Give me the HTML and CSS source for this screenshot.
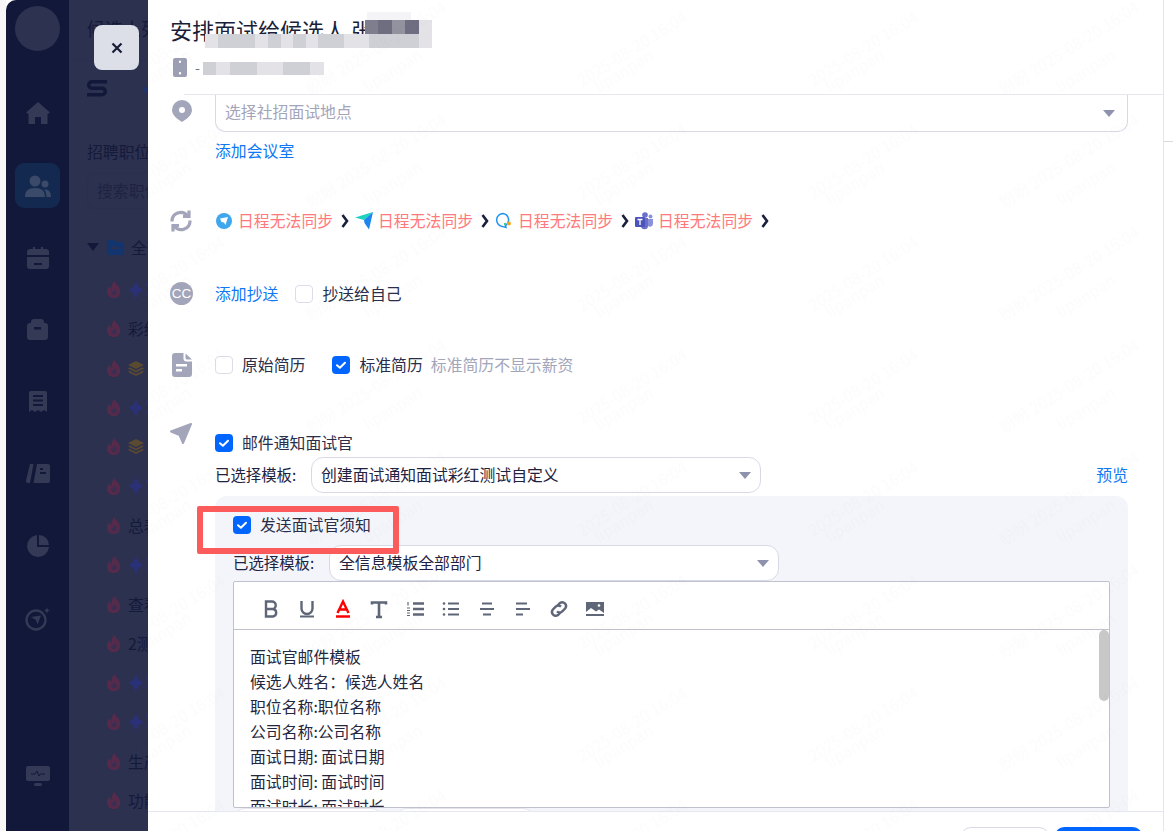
FILE: index.html
```html
<!DOCTYPE html>
<html lang="zh">
<head>
  <meta charset="utf-8">
  <title>安排面试</title>
  <link rel="stylesheet" href="styles.css">
</head>
<body>
<svg class="defs" width="0" height="0">
  <symbol id="flame" viewBox="0 0 14 17"><path d="M7.500 0c.6 2.600 3 3.600 4.600 6.300 2.300 3.900 1 10.700-5.100 10.700C2.600 17 0 14 0 10.700 0 8 1.300 6.300 2.800 5c0 1.600.5 2.500 1.500 3C4.300 5 5.500 2.300 7.500 0z"/><path class="flame-hole" d="M7.500 8c.3 1.200 2.300 2 2.300 3.800A2.800 2.800 0 014.300 12c0-.8.3-1.400.8-1.800.2.600.5.900 1 1 0-1.200.5-2.200 1.400-3.200z"/></symbol>
  <symbol id="spark" viewBox="0 0 26 20"><path d="M8 0c1 5.500 2.800 7.800 8 10-5.200 2.200-7 4.500-8 10-1-5.500-2.800-7.800-8-10 5.200-2.200 7-4.500 8-10z"/><path d="M20 1c.4 2.200 1.100 3.100 3.400 3.800-2.300.7-3 1.600-3.400 3.800-.4-2.200-1.100-3.100-3.400-3.800 2.300-.7 3-1.600 3.400-3.800zM20 11.500c.3 1.800.9 2.500 2.800 3-1.900.5-2.500 1.200-2.800 3-.3-1.800-.9-2.500-2.800-3 1.900-.5 2.500-1.200 2.800-3z"/></symbol>
  <symbol id="layers" viewBox="0 0 16 15"><path d="M8 0l8 4-8 4-8-4zM1.500 6.300L8 9.600l6.500-3.300L16 7.500l-8 4-8-4zM1.500 9.800L8 13l6.500-3.200L16 11l-8 4-8-4z"/></symbol>
  <symbol id="chev" viewBox="0 0 8 14"><path d="M1.500 1l4.500 6-4.500 6" fill="none" stroke="currentColor" stroke-width="2.600" stroke-linejoin="miter"/></symbol>
  <symbol id="tick" viewBox="0 0 18 18"><rect width="18" height="18" rx="4" fill="#0066ff"/><path d="M5 9.200l2.900 2.500L13 6.700" fill="none" stroke="#fff" stroke-width="2" stroke-linecap="round" stroke-linejoin="round"/></symbol>
</svg>

<div class="app">
  <div class="gutter"></div>

  <nav class="sidebar">
    <div class="avatar"></div>
    <a class="nav-item nav-home"><svg width="24" height="22" viewBox="0 0 24 22"><path d="M12 0L24 10.500 21.500 12V22H15v-7H9v7H2.500V12L0 10.500z"/></svg></a>
    <a class="nav-item nav-active"><svg width="26" height="22" viewBox="0 0 26 22"><circle cx="10" cy="6" r="5.500"/><circle cx="20" cy="9" r="3.500"/><path d="M0 22c0-6 3-9 10-9s10 3 10 9zM21.500 22c0-3.500-.8-6-2.500-7.500 4.500-.5 7 2 7 7.500z"/></svg></a>
    <a class="nav-item nav-cal"><svg width="22" height="22" viewBox="0 0 22 22"><path d="M3 2h3V0h2v2h6V0h2v2h3a3 3 0 013 3v3H0V5a3 3 0 013-3zM0 10h22v9a3 3 0 01-3 3H3a3 3 0 01-3-3zm7 6v2h8v-2z" fill-rule="evenodd"/></svg></a>
    <a class="nav-item nav-bag"><svg width="21" height="21" viewBox="0 0 21 21"><path d="M7 0h7a3 3 0 013 3v1h1a3 3 0 013 3v11a3 3 0 01-3 3H3a3 3 0 01-3-3V7a3 3 0 013-3h1V3a3 3 0 013-3zM7 8v2.500h7V8z" fill-rule="evenodd"/></svg></a>
    <a class="nav-item nav-bill"><svg width="18" height="21" viewBox="0 0 18 21"><path d="M2 0h14a2 2 0 012 2v19l-3-2-3 2-3-2-3 2-3-2-3 2V2a2 2 0 012-2zm2 4v2h10V4zm0 4.500v2h10v-2zM4 13v2h10v-2z" fill-rule="evenodd"/></svg></a>
    <a class="nav-item nav-book"><svg width="24" height="19" viewBox="0 0 24 19"><path d="M4 0h3.500L4 19H2a2 2 0 01-2-2.500zM11 0h11a2 2 0 012 2v15a2 2 0 01-2 2H7.500zm3 4v2h3V4zm0 4v2h6V8z" fill-rule="evenodd"/></svg></a>
    <a class="nav-item nav-pie"><svg width="22" height="22" viewBox="0 0 22 22"><path d="M10 0v12h12A11 11 0 1110 0z"/><path d="M12 0a10 10 0 0110 10H12z"/></svg></a>
    <a class="nav-item nav-target"><svg width="26" height="24" viewBox="0 0 26 24" fill="none"><circle cx="11" cy="13" r="9.500" stroke="currentColor" stroke-width="2.400"/><path d="M6 10l10-1.500-3.500 9L11 13z" fill="currentColor"/><path d="M22 0c.3 2.200 1.300 3.200 3.500 3.500-2.200.3-3.200 1.300-3.500 3.500-.3-2.200-1.300-3.200-3.500-3.500 2.200-.3 3.200-1.300 3.500-3.500z" fill="currentColor"/></svg></a>
    <a class="nav-item nav-monitor"><svg width="24" height="20" viewBox="0 0 24 20"><rect width="24" height="15" rx="2"/><rect x="8" y="17" width="8" height="3" rx="1.500"/><path class="pulse" d="M5 8h4l2-3 2 5 1.500-2H19" fill="none" stroke-width="1"/></svg></a>
  </nav>

  <aside class="list-col">
    <div class="list-title">候选人列表</div>
    <div class="list-tools">
      <svg width="20" height="18" viewBox="0 0 20 18"><path d="M5 0h15v3.500H5a1.500 1.500 0 000 3h10a5 5 0 010 10H0V13h15a1.500 1.500 0 000-3H5A5 5 0 015 0z"/></svg>
      <span class="tool-dot"></span>
    </div>
    <div class="list-label">招聘职位名称</div>
    <div class="list-search">搜索职位名称</div>
    <div class="tree-root">
      <span class="caret"></span>
      <svg width="17" height="15" viewBox="0 0 17 15"><path d="M2 0h5l2 2h6a2 2 0 012 2v9a2 2 0 01-2 2H2a2 2 0 01-2-2V2a2 2 0 012-2zm3 7v2h7V7z" fill-rule="evenodd"/></svg>
      <span>全部职位</span>
    </div>
    <ul class="tree">
      <li><svg class="flame"><use href="#flame"/></svg><svg class="spark"><use href="#spark"/></svg></li>
      <li><svg class="flame"><use href="#flame"/></svg><span>彩红测试</span></li>
      <li><svg class="flame"><use href="#flame"/></svg><svg class="layers"><use href="#layers"/></svg></li>
      <li><svg class="flame"><use href="#flame"/></svg><svg class="spark"><use href="#spark"/></svg></li>
      <li><svg class="flame"><use href="#flame"/></svg><svg class="layers"><use href="#layers"/></svg></li>
      <li><svg class="flame"><use href="#flame"/></svg><svg class="spark"><use href="#spark"/></svg></li>
      <li><svg class="flame"><use href="#flame"/></svg><span>总表测试</span></li>
      <li><svg class="flame"><use href="#flame"/></svg><svg class="spark"><use href="#spark"/></svg></li>
      <li><svg class="flame"><use href="#flame"/></svg><span>查看职位</span></li>
      <li><svg class="flame"><use href="#flame"/></svg><span>2测试</span></li>
      <li><svg class="flame"><use href="#flame"/></svg><svg class="spark"><use href="#spark"/></svg></li>
      <li><svg class="flame"><use href="#flame"/></svg><svg class="spark"><use href="#spark"/></svg></li>
      <li><svg class="flame"><use href="#flame"/></svg><span>生产环境</span></li>
      <li><svg class="flame"><use href="#flame"/></svg><span>功能测试</span></li>
    </ul>
  </aside>

  <main class="drawer">
    <header class="drawer-head">
      <h1 class="drawer-title">安排面试给候选人 张</h1>
      <div class="phone-line">
        <svg width="14" height="19" viewBox="0 0 14 19"><path d="M2 0h10a2 2 0 012 2v15a2 2 0 01-2 2H2a2 2 0 01-2-2V2a2 2 0 012-2zm5 2.500a1.200 1.200 0 100 2.400 1.200 1.200 0 000-2.400zm0 11.600a1.200 1.200 0 100 2.400 1.200 1.200 0 000-2.400z" fill-rule="evenodd"/></svg>
        <span>-</span>
      </div>
      <div class="mosaic mosaic-a"><i class="m0"></i><i class="m0"></i><i class="m0"></i></div>
      <div class="mosaic mosaic-b"><i class="m4"></i><i class="m5"></i><i class="m3"></i><i class="m5"></i><i class="m1"></i></div>
      <div class="mosaic mosaic-c"><i class="m1"></i><i class="m2"></i><i class="m2"></i><i class="m2"></i><i class="m1"></i><i class="m2"></i><i class="m1"></i><i class="m2"></i><i class="m1"></i><i class="m2"></i><i class="m2"></i><i class="m1"></i><i class="m1"></i><i class="m2"></i><i class="m2"></i><i class="m2"></i><i class="m2"></i><i class="m1"></i></div>
      <div class="mosaic mosaic-d"><i class="m2"></i><i class="m1"></i><i class="m2"></i><i class="m2"></i><i class="m1"></i><i class="m1"></i><i class="m2"></i><i class="m2"></i><i class="m1"></i></div>
    </header>

    <div class="drawer-body">
      <section class="row">
        <svg class="row-icon icon-pin" width="20" height="22" viewBox="0 0 20 22"><path d="M10 0a10 10 0 0110 10c0 5-5 9-10 12C5 19 0 15 0 10A10 10 0 0110 0zm0 7a3 3 0 100 6 3 3 0 000-6z" fill-rule="evenodd"/></svg>
        <div>
          <div class="select select-place"><span class="tx placeholder">选择社招面试地点</span><span class="tri"></span></div>
          <a class="link add-room">添加会议室</a>
        </div>
      </section>

      <section class="row row-sync">
        <svg class="row-icon icon-sync" width="24" height="24" viewBox="0 0 24 24"><path d="M3 12.500A8.800 8.800 0 0118.500 6.500M21 11.500A8.800 8.800 0 015.500 17.500"/><path d="M20 1.500v6h-6M4 22.500v-6h6"/></svg>
        <div class="sync-list">
          <svg class="sync-icon" width="16" height="16" viewBox="0 0 16 16"><circle cx="8" cy="8" r="8" fill="#3fa7ee"/><path d="M4 5.500l8-1.500-2.500 8-1.500-2.500L5.500 9z" fill="#fff"/></svg>
          <span class="sync-err">日程无法同步</span>
          <svg class="chev"><use href="#chev"/></svg>
          <svg class="sync-icon" width="18" height="18" viewBox="0 0 18 18"><path d="M0 5.500L18 0 9 8z" fill="#1fd2c0"/><path d="M18 0l-4 17.500L9.500 11 9 8z" fill="#1a86ee"/></svg>
          <span class="sync-err">日程无法同步</span>
          <svg class="chev"><use href="#chev"/></svg>
          <svg class="sync-icon" width="18" height="18" viewBox="0 0 18 18" fill="none"><path d="M8 1.500a6.500 6.500 0 00-1 12.900l4 1.100-.6-2A6.500 6.500 0 008 1.500z" stroke="#1f93ee" stroke-width="1.500"/><circle cx="14" cy="11.500" r="2" fill="#f5a623"/><circle cx="10" cy="12" r="1.200" fill="#3ecf8e"/></svg>
          <span class="sync-err">日程无法同步</span>
          <svg class="chev"><use href="#chev"/></svg>
          <svg class="sync-icon" width="18" height="18" viewBox="0 0 18 18"><circle cx="10" cy="3" r="2.800" fill="#6a70c9"/><circle cx="15.500" cy="4.500" r="2" fill="#8a90dc"/><path d="M12 7h6v5a3 3 0 01-5 2z" fill="#8a90dc"/><path d="M6 6h7v7.500A3.500 3.500 0 016 14z" fill="#6a70c9"/><rect y="5" width="10" height="10" rx="1" fill="#4b53bc"/><path d="M2.500 7.500h5M5 7.500v5.500" stroke="#fff" stroke-width="1.300"/></svg>
          <span class="sync-err">日程无法同步</span>
          <svg class="chev"><use href="#chev"/></svg>
        </div>
      </section>

      <section class="row row-cc">
        <div class="cc-badge">CC</div>
        <div class="inline-set">
          <a class="link">添加抄送</a>
          <label class="check"><span class="box"></span><span class="tx">抄送给自己</span></label>
        </div>
      </section>

      <section class="row row-resume">
        <svg class="row-icon icon-file" width="20" height="24" viewBox="0 0 20 24"><path d="M3 0h8.500v5.500a3 3 0 003 3H20V21a3 3 0 01-3 3H3a3 3 0 01-3-3V3a3 3 0 013-3zm1 11v2.500h11V11zm0 5v2.500h6V16z" fill-rule="evenodd"/><path d="M13.500 .5L20 6.500h-5a1.500 1.500 0 01-1.500-1.500z"/></svg>
        <div class="inline-set inline-resume">
          <label class="check"><span class="box"></span><span class="tx">原始简历</span></label>
          <label class="check"><svg class="box-on"><use href="#tick"/></svg><span class="tx">标准简历</span></label>
          <span class="tx hint">标准简历不显示薪资</span>
        </div>
      </section>

      <section class="row row-mail">
        <svg class="row-icon icon-send" width="22" height="21" viewBox="0 0 22 21"><path d="M21 1L1 8.500 9.500 12 13 20z"/></svg>
        <div class="mail-col">
          <label class="check"><svg class="box-on"><use href="#tick"/></svg><span class="tx">邮件通知面试官</span></label>
          <div class="tpl-line">
            <span class="tx tpl-label">已选择模板:</span>
            <div class="select select-tpl"><span class="tx">创建面试通知面试彩红测试自定义</span><span class="tri"></span></div>
            <a class="link preview">预览</a>
          </div>
          <div class="panel">
            <label class="check"><svg class="box-on"><use href="#tick"/></svg><span class="tx">发送面试官须知</span></label>
            <div class="tpl-line tpl-line-inner">
              <span class="tx tpl-label">已选择模板:</span>
              <div class="select select-tpl"><span class="tx">全信息模板全部部门</span><span class="tri"></span></div>
            </div>
            <div class="editor">
              <div class="toolbar">
                <svg viewBox="0 0 20 20"><path d="M5 2.500h6a3.700 3.700 0 010 7.500H5zM5 10h7a3.800 3.800 0 010 7.500H5z" fill="none" stroke="currentColor" stroke-width="2.400"/></svg>
                <svg viewBox="0 0 20 20"><path d="M4.500 2v7.500a5.500 5.500 0 0011 0V2" fill="none" stroke="currentColor" stroke-width="2.400"/><path d="M3 17.500h14" stroke="currentColor" stroke-width="2.200"/></svg>
                <svg viewBox="0 0 20 20"><path d="M4.500 14L10 2.500 15.500 14M6.500 10.500h7" fill="none" stroke="#f00" stroke-width="2.400"/><path d="M3 17.500h14" stroke="#f00" stroke-width="2.400"/></svg>
                <svg viewBox="0 0 20 20"><path d="M3 5.500V3.500h14v2M10 3.500V18M7 18h6" fill="none" stroke="currentColor" stroke-width="2.600"/></svg>
                <svg viewBox="0 0 20 20"><path d="M8 4.500h11M8 10h11M8 15.500h11" stroke="currentColor" stroke-width="2.600"/><path d="M3 3v3.500M2 9h3M2 11.500h3M2 14h3M2 16.500h3" stroke="currentColor" stroke-width="1.200"/></svg>
                <svg viewBox="0 0 20 20"><path d="M7 4.500h11M7 10h11M7 15.500h11" stroke="currentColor" stroke-width="2.200"/><circle cx="3" cy="4.500" r="1.300" fill="currentColor"/><circle cx="3" cy="10" r="1.300" fill="currentColor"/><circle cx="3" cy="15.500" r="1.300" fill="currentColor"/></svg>
                <svg viewBox="0 0 20 20"><path d="M5 4.500h10M3 10h14M6 15.500h8" stroke="currentColor" stroke-width="2.200"/></svg>
                <svg viewBox="0 0 20 20"><path d="M3 4.500h11M3 10h14M3 15.500h7" stroke="currentColor" stroke-width="2.200"/></svg>
                <svg viewBox="0 0 20 20" fill="none" stroke="currentColor" stroke-width="2.400"><path d="M8.500 6.500l2.500-2.500a3.800 3.800 0 015.300 5.300l-3 3a3.800 3.800 0 01-5.300 0"/><path d="M11.500 13.500L9 16a3.800 3.800 0 01-5.300-5.300l3-3a3.800 3.800 0 015.300 0"/></svg>
                <svg viewBox="0 0 20 20"><path d="M1 3h18v14H1zM1 13l5-4 5 3.500 3-2 5 3.500V15H1z" fill="currentColor" fill-rule="evenodd"/><circle cx="14" cy="6.500" r="1.300" fill="#fff"/></svg>
              </div>
              <div class="editor-text">
                <p>面试官邮件模板</p>
                <p>候选人姓名：候选人姓名</p>
                <p>职位名称:职位名称</p>
                <p>公司名称:公司名称</p>
                <p>面试日期: 面试日期</p>
                <p>面试时间: 面试时间</p>
                <p>面试时长: 面试时长</p>
                <div class="scroll-thumb"></div>
              </div>
            </div>
            <div class="below-editor"><span class="stub stub-a"></span><span class="stub stub-b"></span></div>
          </div>
        </div>
      </section>
    </div>

    <footer class="drawer-foot">
      <button class="btn btn-plain">取消</button>
      <button class="btn btn-main">确定</button>
    </footer>
  </main>

  <div class="edge"><span class="edge-tick"></span></div>
</div>

<button class="close-btn"><svg width="12" height="12" viewBox="0 0 12 12"><path d="M1.500 1.500l9 9M10.500 1.500l-9 9" stroke="#161b38" stroke-width="2.200"/></svg></button>
<div class="red-box"></div>

<svg class="watermark" width="1173" height="831">
  <defs>
    <pattern id="wm" width="693" height="112.600" patternUnits="userSpaceOnUse">
      <g>
        <text transform="translate(120 87) rotate(-32)">2025-08-20 16:04</text>
        <text transform="translate(137 93) rotate(-32)">lipanpan</text>
      </g>
      <g>
        <text transform="translate(311 96) rotate(-32)">盼盼 2025-08-20 16:04</text>
        <text transform="translate(368 93) rotate(-32)">lipanpan</text>
      </g>
      <g>
        <text transform="translate(582 87) rotate(-32)">2025-08-20 16:04</text>
        <text transform="translate(599 93) rotate(-32)">lipanpan</text>
      </g>
    </pattern>
  </defs>
  <rect width="1173" height="831" fill="url(#wm)"/>
</svg>
</body>
</html>
```

FILE: styles.css
```css
* { box-sizing: border-box; }

html, body {
  margin: 0;
  padding: 0;
  background: #fff;
  font-family: "Noto Sans CJK SC", "Noto Sans", sans-serif;
  color: #1f2340;
}

.defs { position: absolute; }

.app {
  display: flex;
  width: 1173px;
  height: 831px;
  overflow: hidden;
}

.gutter { width: 6px; background: #f7f7f8; }

/* left nav, dimmed by the drawer mask */
.sidebar {
  width: 63px;
  display: flex;
  flex-direction: column;
  align-items: center;
  padding-top: 6px;
  background: #12183a;
  border-radius: 10px 0 0 0;
  color: #343955;
}
.sidebar svg { fill: #343955; display: block; }
.avatar { width: 45px; height: 45px; border-radius: 50%; background: #2d3250; }
.nav-item { display: flex; justify-content: center; align-items: center; width: 45px; height: 45px; }
.nav-home { margin-top: 39px; }
.nav-active { margin-top: 28px; background: #13294f; border-radius: 9px; }
.nav-active svg { fill: #3a4a68; }
.nav-cal { margin-top: 27px; }
.nav-bag { margin-top: 27px; }
.nav-bill { margin-top: 27px; }
.nav-book { margin-top: 27px; }
.nav-pie { margin-top: 27px; }
.nav-target { margin-top: 28px; }
.nav-target svg { fill: none; }
.nav-monitor { margin-top: 112px; }
.nav-monitor .pulse { stroke: #12183a; }

.list-col {
  width: 79px;
  background: #2c3150;
  padding-left: 18px;
  color: #141a3a;
  overflow: hidden;
  white-space: nowrap;
  font-size: 15.850px;
}
.list-title {
  margin-left: -18px;
  padding: 15px 0 0 18px;
  height: 61px;
  font-size: 18px;
  line-height: 26px;
  border-bottom: 1px solid #2a2f4e;
}
.list-tools { display: flex; align-items: center; gap: 36px; height: 22px; margin-top: 17px; }
.list-tools svg { fill: #12183a; flex: none; }
.tool-dot { width: 5px; height: 5px; border-radius: 50%; background: #1d3470; flex: none; }
.list-label { margin-top: 40px; line-height: 24px; }
.list-search {
  width: 90px;
  height: 36px;
  margin-top: 9px;
  padding-left: 9px;
  line-height: 34px;
  border: 1px solid #2a2f4e;
  border-radius: 8px;
  color: #1e2342;
}
.tree-root { display: flex; align-items: center; gap: 7px; height: 24px; margin-top: 26px; }
.tree-root svg { fill: #13356f; flex: none; margin-left: -1px; }
.caret { width: 0; height: 0; border: 6.500px solid transparent; border-top: 8px solid #12183a; border-bottom: 0; flex: none; margin-right: 2px; }
.tree { list-style: none; margin: 11px 0 0 20px; padding: 0; }
.tree li { display: flex; align-items: center; gap: 7px; height: 39.300px; }
.tree .flame { width: 14px; height: 17px; fill: #562a4a; flex: none; }
.flame-hole { fill: #3a2f52; }
.tree .spark { width: 26px; height: 20px; fill: #2b3176; flex: none; }
.tree .layers { width: 16px; height: 15px; fill: #5a4a30; flex: none; }

/* drawer */
.drawer {
  width: 1015px;
  display: flex;
  flex-direction: column;
  background: #fff;
}
.drawer-head {
  position: relative;
  flex: none;
  height: 95px;
  padding: 14px 0 0 22px;
}
.drawer-head::after {
  content: "";
  position: absolute;
  left: 36px;
  right: 0;
  bottom: 0;
  height: 1px;
  background: #e6e7f0;
}
.drawer-title { margin: 0; font-size: 22px; font-weight: 400; line-height: 30px; color: #1a1e38; white-space: nowrap; }
.phone-line { display: flex; align-items: center; gap: 8px; margin-top: 13px; height: 20px; color: #6f7184; font-size: 14px; }
.phone-line svg { fill: #9c9eb4; margin-left: 3px; }

.mosaic { position: absolute; display: flex; }
.mosaic i { display: block; width: 13.400px; flex: none; }
.mosaic-a { left: 219px; top: 12px; height: 8px; }
.mosaic-a i { width: 14.500px; }
.mosaic-b { left: 217px; top: 20px; height: 14px; }
.mosaic-c { left: 57px; top: 34px; height: 14px; }
.mosaic-c i { width: 12.600px; }
.mosaic-d { left: 55px; top: 62px; height: 13px; }
.m0 { background: #f4f4f6; }
.m1 { background: #e2e2e7; }
.m2 { background: #cfcfd6; }
.m3 { background: #93939f; }
.m4 { background: #7e7e8e; }
.m5 { background: #6e6e80; }

.drawer-body { flex: 1; min-height: 0; overflow: hidden; padding-left: 22px; }
.row { display: grid; grid-template-columns: 45px 913px; }
.row-icon { fill: #a3a5ba; display: block; }
.icon-pin { margin: 5px 0 0 2px; }
.icon-sync { fill: none; stroke: #a3a5ba; stroke-width: 3.200; margin-left: -1px; }
.icon-file { margin-left: 2px; }
.icon-send { stroke: #a3a5ba; stroke-width: 2; stroke-linejoin: round; }

/* Noto sits low in its line box, so lift the text a pixel */
.tx { padding-bottom: 2px; }

.select {
  display: flex;
  align-items: center;
  justify-content: space-between;
  background: #fff;
  border: 1px solid #d8d9e6;
  border-radius: 12px;
  font-size: 15.850px;
  padding: 0 9px;
}
.select-place { height: 37px; border-top: 0; border-radius: 0 0 10px 10px; padding: 0 12px 0 9px; }
.select-place .tx { padding-bottom: 3px; }
.placeholder { color: #a3a5ba; }
.tri { width: 0; height: 0; flex: none; border: 6.500px solid transparent; border-top: 7px solid #8f92ad; border-bottom: 0; }
.link { color: #0f78f5; font-size: 15.850px; line-height: 24px; }
.add-room { display: block; margin-top: 7px; }

.row-sync { margin-top: 46px; }
.sync-list { display: flex; align-items: center; height: 24px; font-size: 15.850px; }
.sync-icon { flex: none; margin-right: 5px; }
.sync-list .sync-icon:first-child { margin-left: 1px; margin-right: 6px; }
.sync-err { color: #ff7a7c; width: 94px; flex: none; white-space: nowrap; padding-bottom: 2px; }
.chev { width: 8px; height: 14px; color: #1a1f3d; flex: none; margin: 0 6px 0 9px; }

.row-cc { margin-top: 49px; }
.cc-badge {
  width: 23px;
  height: 23px;
  border-radius: 50%;
  background: #a3a5ba;
  color: #fff;
  font-size: 13.500px;
  line-height: 23px;
  text-align: center;
  font-family: "Liberation Sans", sans-serif;
}
.inline-set { display: flex; align-items: center; gap: 17px; height: 24px; font-size: 15.850px; }
.check { display: flex; align-items: center; gap: 9px; font-size: 15.850px; line-height: 24px; height: 24px; white-space: nowrap; color: #2a2e4a; }
.check .tx { padding-bottom: 1px; }
.box { width: 18px; height: 18px; border: 1px solid #dcdde8; border-radius: 4px; background: #fff; flex: none; }
.box-on { width: 18px; height: 18px; flex: none; display: block; }

.row-resume { margin-top: 47px; }
.inline-resume { gap: 0; }
.inline-resume .check { margin-right: 27px; }
.inline-resume .check + .check { margin-right: 8px; }
.hint { color: #a3a5ba; }

.row-mail { margin-top: 46px; }
.mail-col { padding-top: 8px; }
.tpl-line { display: flex; align-items: center; margin-top: 2px; font-size: 15.850px; }
.tpl-label { width: 96px; flex: none; white-space: nowrap; font-size: 15.400px; }
.select-tpl { width: 450px; height: 36px; }
.preview { margin-left: auto; }

.panel {
  margin-top: 3px;
  padding: 17px 18px 0;
  height: 340px;
  background: #f4f5fb;
  border-radius: 12px 12px 0 0;
}
.tpl-line-inner { margin-top: 8px; }
.editor {
  height: 227px;
  background: #fff;
  border: 1px solid #bfc1cc;
  border-radius: 2px;
  display: flex;
  flex-direction: column;
  overflow: hidden;
}
.toolbar {
  flex: none;
  display: flex;
  align-items: center;
  gap: 16px;
  height: 48px;
  padding: 6px 0 0 27px;
  border-bottom: 1px solid #bfc1cc;
  color: #5f6678;
}
.toolbar svg { width: 20px; height: 20px; flex: none; display: block; }
.editor-text { position: relative; flex: 1; min-height: 0; overflow: hidden; padding: 14px 16px 0; font-size: 15.850px; line-height: 25px; color: #24283f; }
.editor-text p { margin: 0; white-space: nowrap; }
.scroll-thumb { position: absolute; right: 0; top: 0; width: 10px; height: 71px; background: #c8c8c8; border-radius: 5px; }
.below-editor { display: flex; gap: 18px; padding-left: 3px; margin-top: 0; }
.stub { height: 20px; background: #fff; border: 1px solid #e4e5ee; border-radius: 8px; }
.stub-a { width: 144px; }
.stub-b { width: 134px; }

.drawer-foot {
  flex: none;
  height: 20px;
  display: flex;
  justify-content: flex-end;
  gap: 4px;
  padding: 15px 20px 0 0;
  border-top: 1px solid #e6e7f0;
  overflow: hidden;
}
.btn { width: 90px; height: 40px; flex: none; border-radius: 11px; font: inherit; font-size: 16px; border: 1px solid #d8d9e6; background: #fff; }
.btn-main { width: 89px; border: 0; background: #0066ff; color: #fff; }

.edge { position: relative; flex: 1; border-left: 1px solid #e4e5ee; background: #fff; }
.edge-tick { display: block; height: 1px; margin-top: 141px; background: #d9d9d9; }

/* floating over the page */
.close-btn {
  position: absolute;
  left: 94px;
  top: 25px;
  width: 45px;
  height: 45px;
  padding: 0;
  display: flex;
  align-items: center;
  justify-content: center;
  border: 0;
  border-radius: 8px;
  background: #dcdee8;
}
.red-box {
  position: absolute;
  left: 197px;
  top: 506px;
  width: 202px;
  height: 48px;
  border: 6px solid #fc5b5b;
  border-radius: 2px;
}
.watermark { position: absolute; left: 0; top: 0; pointer-events: none; }
.watermark text { font-family: "Noto Sans CJK SC", "Noto Sans", sans-serif; font-size: 16px; fill: #000; fill-opacity: .011; }
```
